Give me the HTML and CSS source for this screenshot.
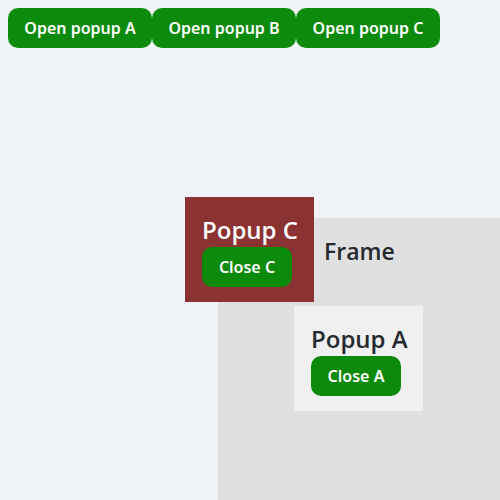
FILE: index.html
```html
<!DOCTYPE html>
<html>
<head>
<meta charset="utf-8">
<link rel="stylesheet" href="styles.css">
</head>
<body>
<div class="toolbar">
  <button class="btn btn-open">Open popup A</button>
  <button class="btn btn-open">Open popup B</button>
  <button class="btn btn-open">Open popup C</button>
</div>
<div class="frame">
  <h2 class="title">Frame</h2>
  <div class="popup popup-a">
    <h2 class="title">Popup A</h2>
    <button class="btn btn-close">Close A</button>
  </div>
  <div class="popup popup-c">
    <h2 class="title">Popup C</h2>
    <button class="btn btn-close">Close C</button>
  </div>
</div>
</body>
</html>
```
FILE: styles.css
```css
html, body {
  margin: 0;
  padding: 0;
  overflow: hidden;
  height: 100%;
}
body {
  background: #f0f4f8;
  padding: 8px;
  box-sizing: border-box;
  font-family: "Noto Sans", sans-serif;
  color: #24292f;
}
.toolbar {
  display: flex;
}
.btn {
  border: none;
  background: #0b8a0b;
  color: #ffffff;
  font-family: "Noto Sans", sans-serif;
  font-weight: 600;
  font-size: 16px;
  border-radius: 10px;
  height: 40px;
  padding: 0;
  cursor: pointer;
}
.btn-open {
  width: 144px;
}
.btn-close {
  width: 90px;
}
.frame {
  position: relative;
  margin-top: 170px;
  margin-left: 210px;
  width: 282px;
  height: 282px;
  background: #e0e0e0;
  padding: 17px 0 0 106px;
  box-sizing: border-box;
}
.title {
  margin: 0;
  font-family: "Open Sans", sans-serif;
  font-weight: 600;
  font-size: 23px;
  line-height: 32px;
}
.popup {
  position: absolute;
  width: 129px;
  height: 105px;
  box-sizing: border-box;
  padding: 17px 0 0 17px;
}
.popup .title {
  font-size: 24px;
  margin-bottom: 1px;
}
.popup-a {
  left: 76px;
  top: 88px;
  background: #f0f0f0;
}
.popup-c {
  left: -33px;
  top: -21px;
  background: #8b3232;
  color: #ffffff;
}
```
